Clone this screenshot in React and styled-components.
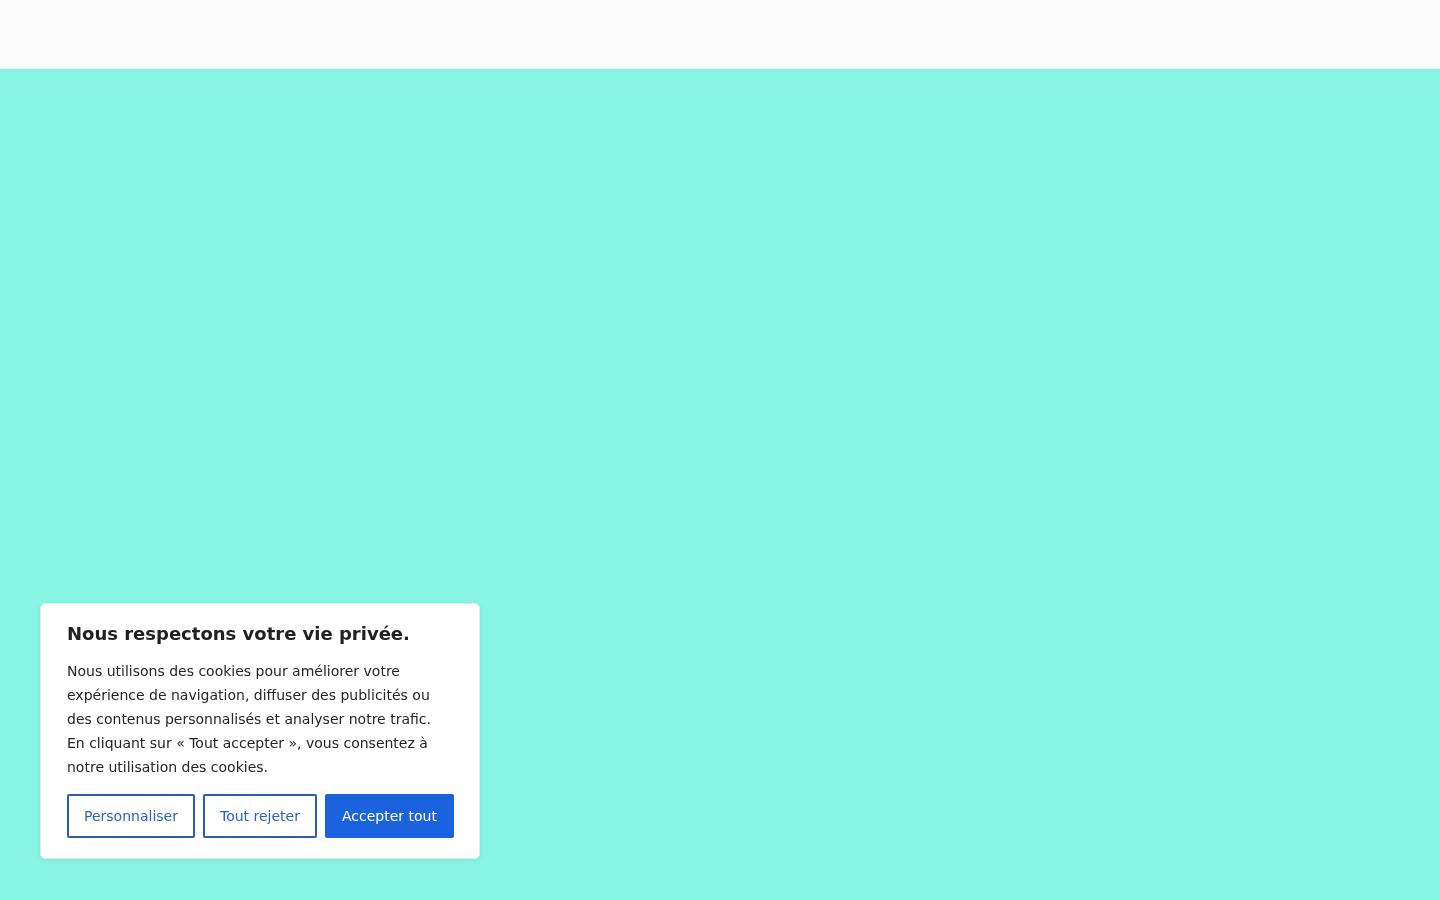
import React from "react";
import styled, { createGlobalStyle } from "styled-components";

const arrowUp =
  "url(\"data:image/svg+xml;utf8,<svg xmlns='http://www.w3.org/2000/svg' width='15' height='15'><path d='M3 10h9L7.5 5z' fill='%23a3a3a3'/></svg>\")";
const arrowDown =
  "url(\"data:image/svg+xml;utf8,<svg xmlns='http://www.w3.org/2000/svg' width='15' height='15'><path d='M3 5h9L7.5 10z' fill='%23a3a3a3'/></svg>\")";

const GlobalStyle = createGlobalStyle`
  html, body {
    margin: 0;
    height: 100%;
    overflow: hidden;
  }
  body {
    font-family: "DejaVu Sans", "Noto Sans", sans-serif;
    background: #87f5e1;
  }
  ::-webkit-scrollbar {
    width: 15px;
  }
  ::-webkit-scrollbar-track {
    background: #fafafa;
  }
  ::-webkit-scrollbar-thumb {
    background: #8c8c8c;
    border-radius: 5px;
    border: 3px solid #fafafa;
    border-top-width: 2px;
    border-bottom-width: 2px;
  }
  ::-webkit-scrollbar-button:single-button {
    display: block;
    height: 15px;
    background-color: #fafafa;
    background-repeat: no-repeat;
    background-position: center;
  }
  ::-webkit-scrollbar-button:single-button:vertical:decrement {
    background-image: ${arrowUp};
  }
  ::-webkit-scrollbar-button:single-button:vertical:increment {
    background-image: ${arrowDown};
  }
`;

const Page = styled.div`
  height: 100vh;
  overflow-y: scroll;
  background: #fafafa;
`;

const Header = styled.header`
  height: 68px;
  background: #fbfbfb;
  border-bottom: 1px solid #eaf3f1;
`;

const Main = styled.main`
  min-height: 1362px;
  background: #87f5e1;
`;

const Banner = styled.div`
  position: fixed;
  left: 40px;
  bottom: 41px;
  width: 440px;
  box-sizing: border-box;
  padding: 18px 26px 20px 26px;
  background: #fff;
  border: 1px solid #e4ece9;
  border-radius: 5px;
  box-shadow: 0 1px 4px rgba(0, 0, 0, 0.08);
  color: #212121;
`;

const Title = styled.h2`
  margin: 0 0 13px;
  font-size: 18px;
  font-weight: 700;
  line-height: 24px;
`;

const Text = styled.p`
  margin: 0 0 15px;
  font-size: 14px;
  line-height: 24px;
  color: #252525;
`;

const Actions = styled.div`
  display: flex;
  gap: 8px;
`;

const Button = styled.button`
  flex-shrink: 0;
  height: 44px;
  padding: 0 15px;
  box-sizing: border-box;
  white-space: nowrap;
  font-family: inherit;
  font-size: 14px;
  border-radius: 2px;
  cursor: pointer;
  border: 2px solid ${p => (p.$primary ? "#1b63de" : "#2a5db3")};
  background: ${p => (p.$primary ? "#1b63de" : "#fff")};
  color: ${p => (p.$primary ? "#fff" : "#2b62c4")};
`;

export default function App() {
  return (
    <>
      <GlobalStyle />
      <Page>
        <Header />
        <Main />
      </Page>
      <Banner>
        <Title>Nous respectons votre vie privée.</Title>
        <Text>
          Nous utilisons des cookies pour améliorer votre expérience de
          navigation, diffuser des publicités ou des contenus personnalisés et
          analyser notre trafic. En cliquant sur « Tout accepter », vous
          consentez à notre utilisation des cookies.
        </Text>
        <Actions>
          <Button>Personnaliser</Button>
          <Button>Tout rejeter</Button>
          <Button $primary>Accepter tout</Button>
        </Actions>
      </Banner>
    </>
  );
}
